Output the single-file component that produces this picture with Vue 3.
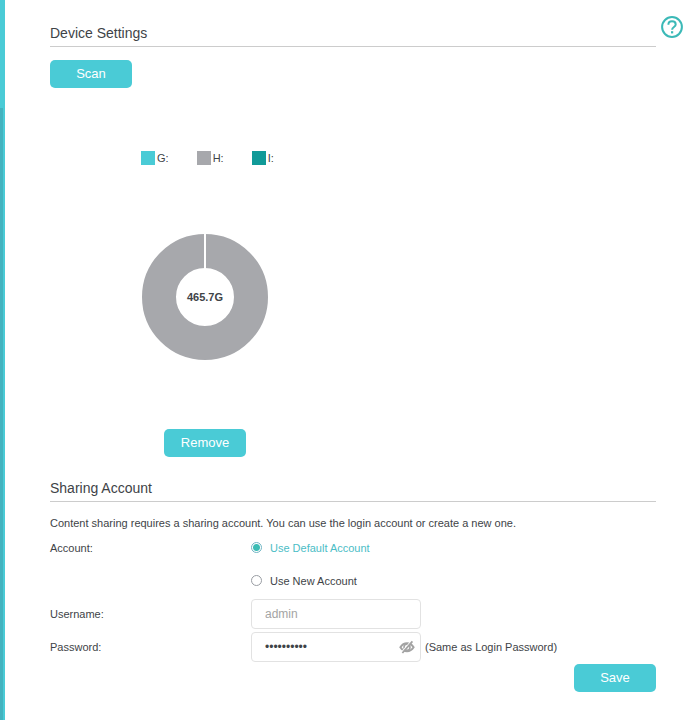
<script setup>
import { ref } from 'vue'

const volumes = [
  { name: 'G:', tone: 'cyan' },
  { name: 'H:', tone: 'grey' },
  { name: 'I:', tone: 'teal' },
]
const account = ref('default')
const username = ref('admin')
const password = ref('admin12345')
const visible = ref(false)
</script>

<template>
  <div class="page">
    <div class="rail"><div class="thumb"></div></div>
    <main class="content">
      <section>
        <h2>Device Settings</h2>
        <button type="button" class="btn scan">Scan</button>
        <div class="device">
          <ul class="legend">
            <li v-for="v in volumes" :key="v.name">
              <span class="swatch" :class="v.tone"></span>{{ v.name }}
            </li>
          </ul>
          <svg class="donut" viewBox="0 0 126 126" role="img">
            <circle cx="63" cy="63" r="46" fill="none" stroke="#a7a8ac" stroke-width="34" />
            <path d="M63 0V35" stroke="#fff" stroke-width="2" />
            <text x="63" y="67" text-anchor="middle">465.7G</text>
          </svg>
          <button type="button" class="btn">Remove</button>
        </div>
      </section>

      <section>
        <h2>Sharing Account</h2>
        <p>Content sharing requires a sharing account. You can use the login account or create a new one.</p>
        <form @submit.prevent>
          <div class="row" role="radiogroup" aria-labelledby="account-label">
            <span id="account-label">Account:</span>
            <label class="choice" :class="{ on: account === 'default' }">
              <input v-model="account" type="radio" name="account" value="default" />Use Default Account
            </label>
            <label class="choice second" :class="{ on: account === 'new' }">
              <input v-model="account" type="radio" name="account" value="new" />Use New Account
            </label>
          </div>
          <div class="row">
            <label for="username">Username:</label>
            <div class="field">
              <input id="username" v-model="username" class="box" type="text" :disabled="account === 'default'" />
            </div>
          </div>
          <div class="row">
            <label for="password">Password:</label>
            <div class="field">
              <div class="secret">
                <input id="password" v-model="password" class="box" :type="visible ? 'text' : 'password'" />
                <button type="button" class="eye" @click="visible = !visible">
                  <svg viewBox="0 0 16 14" fill="none">
                    <path d="M1.400 7.200C3.200 4.400 5.400 3.200 8 3.200s4.800 1.200 6.600 4C12.800 10 10.600 11.200 8 11.200S3.200 10 1.400 7.200Z" stroke="#a3a3a3" stroke-width="2" />
                    <circle cx="8" cy="7.200" r="3" stroke="#a3a3a3" stroke-width="1.600" />
                    <path d="M2.600 12.200L12.200 1.200" stroke="#fff" stroke-width="1.200" />
                    <path d="M3.400 13L13.400 1.400" stroke="#a3a3a3" stroke-width="1.800" />
                  </svg>
                </button>
              </div>
              <span>(Same as Login Password)</span>
            </div>
          </div>
          <div class="actions"><button type="submit" class="btn">Save</button></div>
        </form>
      </section>
    </main>
    <a class="help" href="#help">
      <svg viewBox="0 0 22 22" fill="none" stroke="#3bb9b7">
        <circle cx="11" cy="11" r="9.900" stroke-width="2" />
        <path d="M7.400 8.700C7.400 6.500 8.900 5.300 11 5.300s3.700 1.200 3.700 3.100c0 2.500-3.600 2.600-3.600 5.300" stroke-width="2" />
        <path d="M10 15.200h2.200v2.200H10z" fill="#3bb9b7" stroke="none" />
      </svg>
    </a>
  </div>
</template>

<style>
body {
  margin: 0;
  background: #fff;
}
</style>

<style scoped>
.page {
  display: flex;
  min-height: 100vh;
  font: 11px/16px "Liberation Sans", Arial, sans-serif;
  color: #3e4347;
}
.rail {
  flex: none;
  width: 5px;
  padding-top: 108px;
  box-sizing: border-box;
  background: #4acbd6;
}
.thumb {
  width: 3px;
  height: 100%;
  background: #43b3bf;
}
.content {
  flex: 1;
  min-width: 0;
  padding: 23px 5px 28px 45px;
}
.help {
  flex: none;
  width: 22px;
  height: 22px;
  margin: 16px 12px 0 0;
}
.help svg,
.eye svg {
  display: block;
  width: 100%;
  height: 100%;
}
h2 {
  margin: 0;
  padding-bottom: 3px;
  border-bottom: 1px solid #ccc;
  font-size: 14px;
  line-height: 20px;
  font-weight: 400;
}
.btn {
  display: block;
  width: 82px;
  height: 28px;
  padding: 0;
  border: 0;
  border-radius: 5px;
  background: #4acbd6;
  color: #fff;
  font: 13px/28px "Liberation Sans", Arial, sans-serif;
  cursor: pointer;
}
.scan {
  margin-top: 13px;
}
.device {
  display: flex;
  flex-direction: column;
  align-items: center;
  width: 310px;
  max-width: 100%;
  padding: 62px 0 21px;
}
.legend {
  display: flex;
  gap: 28px;
  width: 128px;
  margin: 0;
  padding: 0;
  list-style: none;
}
.legend li {
  display: flex;
  align-items: center;
  gap: 2px;
  white-space: nowrap;
}
.swatch {
  width: 14px;
  height: 14px;
}
.cyan {
  background: #4acbd6;
}
.grey {
  background: #a7a8ac;
}
.teal {
  background: #119a98;
}
.donut {
  width: 126px;
  height: 126px;
  margin: 68px 0 69px;
}
.donut text {
  font-size: 11px;
  font-weight: 700;
  fill: #3e4347;
}
p {
  margin: 13px 0 8px;
}
.row {
  display: grid;
  grid-template-columns: 201px 1fr;
  align-items: center;
  margin-bottom: 3px;
}
.choice {
  display: flex;
  align-items: center;
  gap: 8px;
  height: 17px;
}
.choice.on {
  color: #4bbdc6;
}
.second {
  grid-column: 2;
  margin: 16px 0 7px;
}
.choice input {
  appearance: none;
  width: 11px;
  height: 11px;
  margin: 0;
  border: 1px solid #999da3;
  border-radius: 50%;
}
.choice input:checked {
  border-color: #6fb5c4;
  background: radial-gradient(circle, #3bbcb4 3px, #fff 4px);
}
.field {
  display: flex;
  align-items: center;
  gap: 4px;
}
.box {
  display: block;
  box-sizing: border-box;
  width: 170px;
  height: 30px;
  padding: 0 30px 0 13px;
  border: 1px solid #e2e2e2;
  border-radius: 4px;
  background: #fff;
  color: #3e4347;
  font: 12px/16px "Liberation Sans", Arial, sans-serif;
}
.box:disabled {
  color: #a4a4a4;
}
.secret {
  position: relative;
}
.eye {
  position: absolute;
  top: 8px;
  right: 6px;
  width: 16px;
  height: 14px;
  padding: 0;
  border: 0;
  background: none;
  cursor: pointer;
}
.actions {
  display: flex;
  justify-content: flex-end;
  margin-top: -1px;
}
</style>
